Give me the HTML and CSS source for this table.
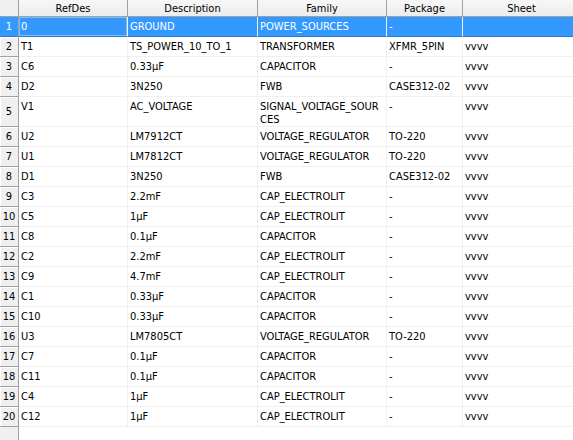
FILE: index.html
```html
<!DOCTYPE html>
<html>
<head>
<meta charset="utf-8">
<link rel="stylesheet" href="styles.css">
</head>
<body>
<div class="grid">
<table class="sheet">
<colgroup>
<col class="c-num"><col class="c-ref"><col class="c-desc"><col class="c-fam"><col class="c-pkg"><col class="c-sheet">
</colgroup>
<thead>
<tr><th class="corner"></th><th>RefDes</th><th>Description</th><th>Family</th><th>Package</th><th>Sheet</th></tr>
</thead>
<tbody>
<tr class="sel"><td class="num">1</td><td class="focus">0</td><td>GROUND</td><td>POWER_SOURCES</td><td>-</td><td></td></tr>
<tr><td class="num">2</td><td>T1</td><td>TS_POWER_10_TO_1</td><td>TRANSFORMER</td><td>XFMR_5PIN</td><td>vvvv</td></tr>
<tr><td class="num">3</td><td>C6</td><td>0.33µF</td><td>CAPACITOR</td><td>-</td><td>vvvv</td></tr>
<tr><td class="num">4</td><td>D2</td><td>3N250</td><td>FWB</td><td>CASE312-02</td><td>vvvv</td></tr>
<tr><td class="num">5</td><td>V1</td><td>AC_VOLTAGE</td><td class="wrap">SIGNAL_VOLTAGE_SOURCES</td><td>-</td><td>vvvv</td></tr>
<tr><td class="num">6</td><td>U2</td><td>LM7912CT</td><td>VOLTAGE_REGULATOR</td><td>TO-220</td><td>vvvv</td></tr>
<tr><td class="num">7</td><td>U1</td><td>LM7812CT</td><td>VOLTAGE_REGULATOR</td><td>TO-220</td><td>vvvv</td></tr>
<tr><td class="num">8</td><td>D1</td><td>3N250</td><td>FWB</td><td>CASE312-02</td><td>vvvv</td></tr>
<tr><td class="num">9</td><td>C3</td><td>2.2mF</td><td>CAP_ELECTROLIT</td><td>-</td><td>vvvv</td></tr>
<tr><td class="num">10</td><td>C5</td><td>1µF</td><td>CAP_ELECTROLIT</td><td>-</td><td>vvvv</td></tr>
<tr><td class="num">11</td><td>C8</td><td>0.1µF</td><td>CAPACITOR</td><td>-</td><td>vvvv</td></tr>
<tr><td class="num">12</td><td>C2</td><td>2.2mF</td><td>CAP_ELECTROLIT</td><td>-</td><td>vvvv</td></tr>
<tr><td class="num">13</td><td>C9</td><td>4.7mF</td><td>CAP_ELECTROLIT</td><td>-</td><td>vvvv</td></tr>
<tr><td class="num">14</td><td>C1</td><td>0.33µF</td><td>CAPACITOR</td><td>-</td><td>vvvv</td></tr>
<tr><td class="num">15</td><td>C10</td><td>0.33µF</td><td>CAPACITOR</td><td>-</td><td>vvvv</td></tr>
<tr><td class="num">16</td><td>U3</td><td>LM7805CT</td><td>VOLTAGE_REGULATOR</td><td>TO-220</td><td>vvvv</td></tr>
<tr><td class="num">17</td><td>C7</td><td>0.1µF</td><td>CAPACITOR</td><td>-</td><td>vvvv</td></tr>
<tr><td class="num">18</td><td>C11</td><td>0.1µF</td><td>CAPACITOR</td><td>-</td><td>vvvv</td></tr>
<tr><td class="num">19</td><td>C4</td><td>1µF</td><td>CAP_ELECTROLIT</td><td>-</td><td>vvvv</td></tr>
<tr><td class="num">20</td><td>C12</td><td>1µF</td><td>CAP_ELECTROLIT</td><td>-</td><td>vvvv</td></tr>
</tbody>
</table>
</div>
</body>
</html>
```
FILE: styles.css
```css
html, body {
  margin: 0;
  padding: 0;
  background: #ffffff;
}
.grid {
  width: 573px;
  height: 440px;
  overflow: hidden;
  background: linear-gradient(to right, #f0f0f0 0, #f0f0f0 18px, #a0a0a0 18px, #a0a0a0 19px, #ffffff 19px);
  font-family: "DejaVu Sans Condensed", "DejaVu Sans", sans-serif;
  font-stretch: condensed;
  font-size: 11px;
  color: #000;
}
.sheet {
  border-collapse: separate;
  border-spacing: 0;
  table-layout: fixed;
  width: 581px;
}
.c-num { width: 19px; }
.c-ref { width: 109px; }
.c-desc { width: 130px; }
.c-fam { width: 129px; }
.c-pkg { width: 76px; }
.c-sheet { width: 118px; }

th {
  height: 16px;
  padding: 0;
  font-weight: normal;
  text-align: center;
  vertical-align: middle;
  line-height: 13px;
  background: linear-gradient(to bottom, #f7f7f7, #ececec);
  border-right: 1px solid #a0a0a0;
  border-bottom: 1px solid #a0a0a0;
  color: #000;
}
th.corner {
  background: #f0f0f0;
}
td {
  height: 16px;
  padding: 3px 1px 0 2px;
  vertical-align: top;
  line-height: 13px;
  border-right: 1px solid #f0f0f0;
  border-bottom: 1px solid #f0f0f0;
  white-space: nowrap;
  overflow: hidden;
}
td.num {
  padding: 0;
  text-align: center;
  vertical-align: middle;
  background: #f0f0f0;
  border-right: 1px solid #a0a0a0;
  border-bottom: 1px solid #a0a0a0;
  box-shadow: inset 1px 1px 0 #ffffff;
  color: #000;
}
td.wrap {
  white-space: normal;
  word-break: break-all;
}
tr.sel td {
  background: #3399ff;
  color: #ffffff;
  border-bottom-color: #2a7ad0;
}
tr.sel td.num {
  background: #3399ff;
  box-shadow: none;
}
tr.sel td.focus {
  box-shadow: inset 0 0 0 1px #7bbcff;
}
```
